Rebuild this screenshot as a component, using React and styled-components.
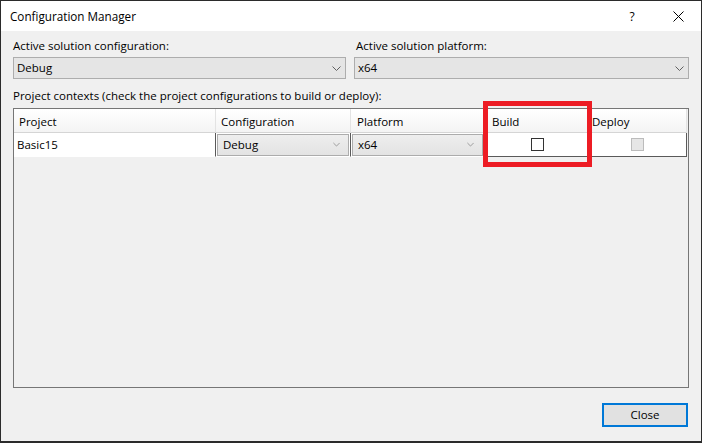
import React from 'react';
import styled, { createGlobalStyle } from 'styled-components';

const Global = createGlobalStyle`
  html, body { margin: 0; padding: 0; background: #f0f0f0; }
  * { box-sizing: border-box; }
  body { font-family: "Open Sans", "Noto Sans", sans-serif; font-size: 11.5px; color: #000; }
`;

const Window = styled.div`
  position: relative;
  width: 702px;
  height: 443px;
  border: 1px solid #2b2b2b;
  border-bottom-width: 2px;
  background: #f0f0f0;
  display: flex;
  flex-direction: column;
`;

const TitleBar = styled.div`
  height: 30px;
  background: #ffffff;
  display: flex;
  align-items: center;
  padding-left: 9px;
`;

const Title = styled.div`
  flex: 1;
  font-size: 11.7px;
  line-height: 16px;
`;

const CaptionButton = styled.div`
  width: 46px;
  height: 30px;
  display: flex;
  align-items: center;
  justify-content: center;
  font-size: 12px;
  color: #000;
`;

const Body = styled.div`
  flex: 1;
  display: flex;
  flex-direction: column;
  padding: 7px 12px 14px 12px;
`;

const TopGrid = styled.div`
  display: grid;
  grid-template-columns: 333px 335px;
  column-gap: 8px;
`;

const Field = styled.div`
  display: flex;
  flex-direction: column;
`;

const Label = styled.div`
  line-height: 16px;
  margin-bottom: ${p => p.$mb || 3}px;
  margin-top: ${p => p.$mt || 0}px;
  padding-left: ${p => p.$pl || 0}px;
  white-space: nowrap;
`;

const Select = styled.div`
  height: 22px;
  border: 1px solid #adadad;
  background: #e5e5e5;
  display: flex;
  align-items: center;
  padding: 0 4px 0 ${p => p.$pl || 3}px;
  line-height: 16px;
`;

const SelectText = styled.span`
  flex: 1;
`;

const Chevron = ({ color = '#606060', w = 9 }) => (
  <svg width={w} height="5" viewBox="0 0 9 5" style={{ display: 'block' }}>
    <path d="M0.5 0.5 L4.5 4.5 L8.5 0.5" fill="none" stroke={color} strokeWidth="1" />
  </svg>
);

const TableFrame = styled.div`
  position: relative;
  height: 280px;
  border: 1px solid #767676;
  background: #f0f0f0;
`;

const Row = styled.div`
  display: grid;
  grid-template-columns: 202px 135px 136px 101px 99px;
  height: 24px;
`;

const HeaderCell = styled.div`
  background: linear-gradient(#ffffff, #f4f4f4);
  border-right: 1px solid #e3e3e3;
  border-bottom: 1px solid #d5d5d5;
  padding-left: ${p => p.$pl || 5}px;
  padding-top: 1px;
  display: flex;
  align-items: center;
  white-space: nowrap;
`;

const Cell = styled.div`
  background: #ffffff;
  border-right: 1px solid #5a5a5a;
  border-bottom: 1px solid ${p => p.$dark ? '#5a5a5a' : '#ffffff'};
  display: flex;
  align-items: center;
  justify-content: ${p => p.$center ? 'center' : 'flex-start'};
  padding: ${p => p.$pad || '0 0 0 3px'};
`;

const CellSelect = styled.div`
  flex: 1;
  height: 22px;
  border: 1px solid #acacac;
  background: linear-gradient(#eeeeee, #e3e3e3);
  display: flex;
  align-items: center;
  padding: 0 8px 0 5px;
`;

const Check = styled.div`
  width: 13px;
  height: 13px;
  border: 1px solid ${p => p.$disabled ? '#bcbcbc' : '#333333'};
  background: ${p => p.$disabled ? '#e6e6e6' : '#ffffff'};
`;

const Highlight = styled.div`
  position: absolute;
  left: 469px;
  top: -8px;
  width: 109px;
  height: 66px;
  border: 5px solid #ed1c24;
  pointer-events: none;
`;

const Footer = styled.div`
  margin-top: 15px;
  display: flex;
  justify-content: flex-end;
  padding-right: 1px;
`;

const Button = styled.div`
  width: 86px;
  height: 24px;
  border: 2px solid #0078d7;
  background: #e1e1e1;
  display: flex;
  align-items: center;
  justify-content: center;
  line-height: 16px;
`;

const CloseIcon = () => (
  <svg width="11" height="11" viewBox="0 0 11 11" style={{ display: 'block' }}>
    <path d="M0.5 0.5 L10.5 10.5 M10.5 0.5 L0.5 10.5" stroke="#000" strokeWidth="1" fill="none" />
  </svg>
);

export default function App() {
  return (
    <>
      <Global />
      <Window>
        <TitleBar>
          <Title>Configuration Manager</Title>
          <CaptionButton>?</CaptionButton>
          <CaptionButton><CloseIcon /></CaptionButton>
        </TitleBar>
        <Body>
          <TopGrid>
            <Field>
              <Label>Active solution configuration:</Label>
              <Select $pl={3}>
                <SelectText>Debug</SelectText>
                <Chevron />
              </Select>
            </Field>
            <Field>
              <Label $pl={2}>Active solution platform:</Label>
              <Select $pl={3}>
                <SelectText>x64</SelectText>
                <Chevron />
              </Select>
            </Field>
          </TopGrid>
          <Label $mt={9} $mb={4}>Project contexts (check the project configurations to build or deploy):</Label>
          <TableFrame>
            <Row>
              <HeaderCell>Project</HeaderCell>
              <HeaderCell>Configuration</HeaderCell>
              <HeaderCell $pl={6}>Platform</HeaderCell>
              <HeaderCell>Build</HeaderCell>
              <HeaderCell $pl={4}>Deploy</HeaderCell>
            </Row>
            <Row>
              <Cell>Basic15</Cell>
              <Cell $pad="0 1px 0 1px">
                <CellSelect>
                  <SelectText>Debug</SelectText>
                  <Chevron w={7} color="#888" />
                </CellSelect>
              </Cell>
              <Cell $pad="0 3px 0 1px">
                <CellSelect>
                  <SelectText>x64</SelectText>
                  <Chevron w={7} color="#888" />
                </CellSelect>
              </Cell>
              <Cell $dark $center $pad="0">
                <Check />
              </Cell>
              <Cell $dark $center $pad="0">
                <Check $disabled />
              </Cell>
            </Row>
            <Highlight />
          </TableFrame>
          <Footer>
            <Button>Close</Button>
          </Footer>
        </Body>
      </Window>
    </>
  );
}
